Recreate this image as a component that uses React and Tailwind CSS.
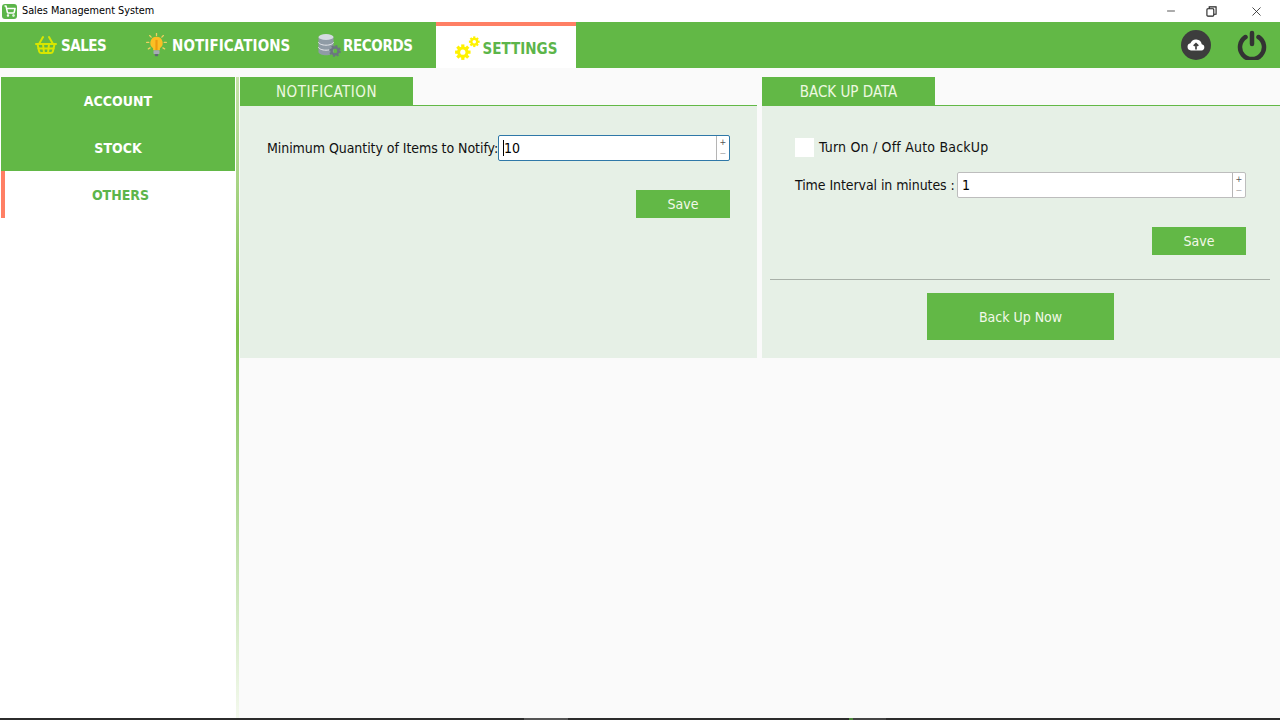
import { Minus, ShoppingCart, ShoppingBasket, X } from 'lucide-react'

const font = '[font-family:"DejaVu_Sans_Condensed","DejaVu_Sans",sans-serif]'

function BulbIcon() {
  return (
    <svg viewBox="0 0 24 28" className="w-[21px] h-[24px]">
      <g stroke="#f0d060" strokeWidth="1.500" strokeLinecap="round">
        <path d="M12 0.500v2.500M4 3l1.800 1.800M20 3l-1.800 1.800M0.500 11h2.500M21 11h2.500M2.500 18.500l2-1.200M21.500 18.500l-2-1.200"/>
      </g>
      <path d="M12 4.500a7.200 7.200 0 0 0-4 13.200V20h8v-2.300a7.200 7.200 0 0 0-4-13.200z" fill="#fbbf24"/>
      <path d="M12 8v12" stroke="#ee9a10" strokeWidth="2.500"/>
      <rect x="8.500" y="20" width="7" height="4.500" rx="1" fill="#a4abb3"/>
      <rect x="10" y="24.500" width="4" height="2.500" rx="1" fill="#5f6873"/>
    </svg>
  )
}

function RecordsIcon() {
  return (
    <svg viewBox="0 0 24 24" className="w-[24px] h-[24px]">
      <path d="M1.500 4v15c0 1.700 3.400 3.200 7.500 3.200s7.500-1.500 7.500-3.200V4z" fill="#8f9ba5"/>
      <ellipse cx="9" cy="4" rx="7.500" ry="3" fill="#d5dbe0"/>
      <path d="M1.500 9c0 1.700 3.400 3.200 7.500 3.200s7.500-1.500 7.500-3.200M1.500 14c0 1.700 3.400 3.200 7.500 3.200s7.500-1.500 7.500-3.200" fill="none" stroke="#e5e7eb" strokeWidth="1"/>
      <circle cx="18" cy="18" r="3.500" fill="none" stroke="#6b7680" strokeWidth="2.500"/>
      <circle cx="18" cy="18" r="5" fill="none" stroke="#6b7680" strokeWidth="1.800" strokeDasharray="2 1.900"/>
    </svg>
  )
}

function Gear({ cx, cy, r }) {
  const teeth = [0, 45, 90, 135]
  return (
    <g>
      {teeth.map(a => (
        <rect key={a} x={cx - r * 1.35} y={cy - r * 0.28} width={r * 2.7} height={r * 0.56} fill="#fff200" transform={`rotate(${a} ${cx} ${cy})`}/>
      ))}
      <circle cx={cx} cy={cy} r={r} fill="#fff200"/>
      <circle cx={cx} cy={cy} r={r * 0.45} fill="#fff"/>
    </g>
  )
}

function GearsIcon() {
  return (
    <svg viewBox="0 0 24 24" className="w-[25px] h-[25px]">
      <Gear cx={7.500} cy={15.500} r={5.500}/>
      <Gear cx={18.500} cy={5.500} r={3.800}/>
    </svg>
  )
}

function NavItem({ icon, label, className, labelClass }) {
  return (
    <div className={`flex items-center text-white font-bold text-[15px] ${className}`}>
      {icon}
      <span className={`pt-[2px] ${labelClass}`}>{label}</span>
    </div>
  )
}

function Spinner({ value, focused, className }) {
  return (
    <div className={`h-[26px] flex bg-white rounded-[2px] border ${focused ? 'border-[#2f78a8]' : 'border-[#bdbdbd]'} ${className}`}>
      <div className="flex-1 flex items-center pl-[4px] text-[14px] text-black">
        {focused && <span className="w-px h-[16px] bg-black"/>}
        <span>{value}</span>
      </div>
      <div className="w-[13px] border-l border-[#b5b5b5] flex flex-col items-center justify-center text-[9px] leading-[11px] text-[#555]">
        <span>+</span>
        <span className="text-[#aaa]">−</span>
      </div>
    </div>
  )
}

function Panel({ title, tabClass, className, children }) {
  return (
    <section className={`flex flex-col h-[281px] ${className}`}>
      <div className="h-[29px] flex shrink-0 border-b border-[#62b846]">
        <div className={`h-[28px] pt-[2px] bg-[#62b846] text-[#eef8e0] text-[15px] flex items-center justify-center ${tabClass}`}>{title}</div>
      </div>
      <div className="flex-1 bg-[#e6f0e6] text-[14px] text-[#111]">{children}</div>
    </section>
  )
}

function GreenButton({ children, className }) {
  return (
    <button className={`bg-[#62b846] text-[#f2f8ea] text-[14px] flex items-center justify-center ${className}`}>{children}</button>
  )
}

export default function App() {
  return (
    <div className={`h-[720px] w-[1280px] overflow-hidden flex flex-col bg-[#fafafa] ${font}`}>
      {/* Title bar */}
      <div className="h-[22px] shrink-0 bg-white flex items-center">
        <div className="ml-[2px] w-[15px] h-[15px] rounded-[3px] bg-[#5cb54a] flex items-center justify-center">
          <ShoppingCart size={12} color="#fff" strokeWidth={3}/>
        </div>
        <span className="ml-[5px] pt-[1px] text-[10.800px] text-black">Sales Management System</span>
        <div className="ml-auto flex items-center text-[#222]">
          <Minus size={12} strokeWidth={1.500} className="mr-[29px]"/>
          <svg viewBox="0 0 12 12" className="w-[11px] h-[11px] mr-[32px]" fill="none" stroke="#222" strokeWidth="1.200">
            <rect x="1" y="3" width="7.500" height="8" rx="1"/>
            <path d="M3.500 3V1h7.500v8H8.500"/>
          </svg>
          <X size={15} strokeWidth={1.300} className="mr-[16px]"/>
        </div>
      </div>

      {/* Menu bar */}
      <nav className="h-[46px] shrink-0 bg-[#62b846] flex">
        <NavItem className="ml-[34px] w-[112px] gap-[3px]" labelClass="tracking-[-0.5px]" label="SALES" icon={<ShoppingBasket size={24} color="#d8e600" strokeWidth={2}/>}/>
        <NavItem className="w-[171px] gap-[5px]" labelClass="tracking-[0.1px]" label="NOTIFICATIONS" icon={<BulbIcon/>}/>
        <NavItem className="w-[119px] gap-[2px]" labelClass="tracking-[-0.4px]" label="RECORDS" icon={<RecordsIcon/>}/>
        <div className="w-[140px] h-[46px] bg-white border-t-4 border-[#ff7f64] flex items-center justify-center gap-[3px] pt-[2px] text-[#5cb54a] font-bold text-[15px]">
          <GearsIcon/>
          <span className="pt-[2px]">SETTINGS</span>
        </div>
        <div className="ml-auto flex items-center mr-[13px]">
          <div className="w-[30px] h-[30px] rounded-full bg-[#3d3d3d] flex items-center justify-center mr-[26px]">
            <svg viewBox="0 0 24 24" className="w-[22px] h-[22px]">
              <path d="M6.500 18a4 4 0 0 1-.6-7.900 6.500 6.500 0 0 1 12.400 1A3.500 3.500 0 0 1 18 18z" fill="#fff"/>
              <path d="M12 17v-6M9.500 13l2.500-2.500 2.500 2.500" fill="none" stroke="#3d3d3d" strokeWidth="1.800"/>
            </svg>
          </div>
          <svg viewBox="0 0 30 30" className="w-[30px] h-[30px]" fill="none" stroke="#333" strokeWidth="4.500" strokeLinecap="round">
            <path d="M8.500 7a12 12 0 1 0 13 0"/>
            <path d="M15 3v11"/>
          </svg>
        </div>
      </nav>

      <div className="flex-1 flex min-h-0 pt-[9px]">
        {/* Sidebar */}
        <aside className="w-[236px] shrink-0 bg-white">
          <div className="ml-[1px] w-[234px] h-[47px] pt-[1px] bg-[#62b846] text-white font-bold text-[14px] flex items-center justify-center">ACCOUNT</div>
          <div className="ml-[1px] w-[234px] h-[47px] pt-[1px] bg-[#62b846] text-white font-bold text-[14px] flex items-center justify-center">STOCK</div>
          <div className="ml-[1px] h-[47px] pt-[1px] border-l-4 border-[#ff7f64] text-[#5cb54a] font-bold text-[14px] flex items-center justify-center">OTHERS</div>
        </aside>
        <div className="w-[3px] shrink-0 bg-gradient-to-b from-[#c5e2a8] via-[#7cc04a] via-40% to-[#f4f9ee]"/>
        <div className="w-px shrink-0"/>

        {/* Notification */}
        <Panel title={<span className="tracking-[0.5px]">NOTIFICATION</span>} tabClass="w-[173px]" className="w-[517px] mr-[5px]">
          <div className="flex items-center mt-[29px] pl-[27px]">
            <span className="w-[231px] whitespace-nowrap tracking-[-0.060px]">Minimum Quantity of Items to Notify:</span>
            <Spinner value="10" focused className="w-[232px]"/>
          </div>
          <div className="flex justify-end mt-[29px] pr-[27px]">
            <GreenButton className="w-[94px] h-[28px]">Save</GreenButton>
          </div>
        </Panel>

        {/* Back up */}
        <Panel title="BACK UP DATA" tabClass="w-[173px]" className="w-[518px]">
          <div className="flex items-center mt-[31px] pl-[33px]">
            <span className="w-[19px] h-[19px] bg-white mr-[5px]"/>
            <span className="tracking-[0.200px]">Turn On / Off Auto BackUp</span>
          </div>
          <div className="flex items-center mt-[14px] pl-[33px]">
            <span className="w-[162px] whitespace-nowrap tracking-[-0.080px]">Time Interval in minutes :</span>
            <Spinner value="1" className="w-[289px]"/>
          </div>
          <div className="flex justify-end mt-[29px] pr-[34px]">
            <GreenButton className="w-[94px] h-[28px] pt-[1px]">Save</GreenButton>
          </div>
          <div className="ml-[8px] mr-[10px] mt-[24px] border-t border-[#a8b0a8]"/>
          <div className="flex justify-center mt-[13px] pr-[1px]">
            <GreenButton className="w-[187px] h-[47px] pt-[2px]">Back Up Now</GreenButton>
          </div>
        </Panel>
      </div>

      {/* Taskbar edge */}
      <div className="h-[2px] shrink-0 bg-[#2c2c2c] flex">
        <div className="ml-[524px] w-[44px] bg-[#555]"/>
        <div className="ml-[281px] w-[4px] bg-[#4f8a3e]"/>
        <div className="w-[33px] bg-[#444]"/>
      </div>
    </div>
  )
}
